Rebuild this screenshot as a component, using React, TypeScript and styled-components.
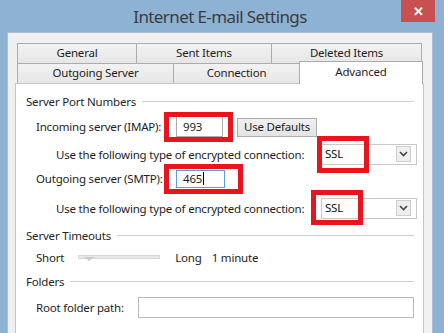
import styled, { createGlobalStyle } from 'styled-components'

const GlobalStyle = createGlobalStyle`
  html, body {
    margin: 0;
    padding: 0;
    background: #8db2d3;
  }
  * {
    box-sizing: border-box;
  }
`

const topTabs = [
  { label: 'General', width: 120 },
  { label: 'Sent Items', width: 136 },
  { label: 'Deleted Items', width: 151 },
]

const bottomTabs = [
  { label: 'Outgoing Server', width: 157, active: false },
  { label: 'Connection', width: 127, active: false },
  { label: 'Advanced', width: 124, active: true },
]

const Chevron = () => (
  <svg width="9" height="6" viewBox="0 0 9 6">
    <path d="M1 1 L4.5 4.5 L8 1" fill="none" stroke="#444" strokeWidth="1.6" />
  </svg>
)

const Select = ({ value }: { value: string }) => (
  <SelectBox>
    <SelectValue>{value}</SelectValue>
    <SelectButton>
      <Chevron />
    </SelectButton>
  </SelectBox>
)

export default function App() {
  return (
    <Window>
      <GlobalStyle />
      <TitleBar>
        <Title>Internet E-mail Settings</Title>
        <CloseButton>✕</CloseButton>
      </TitleBar>
      <DialogBody>
        <Tabs>
          <TabRow>
            {topTabs.map((tab) => (
              <Tab key={tab.label} $width={tab.width}>
                {tab.label}
              </Tab>
            ))}
          </TabRow>
          <TabRow>
            {bottomTabs.map((tab) => (
              <Tab key={tab.label} $width={tab.width} $active={tab.active}>
                {tab.label}
              </Tab>
            ))}
          </TabRow>
        </Tabs>
        <Panel>
          <GroupHeader>
            <span>Server Port Numbers</span>
            <Rule />
          </GroupHeader>
          <PortRow $gap={7}>
            <Label>Incoming server (IMAP):</Label>
            <Marked>
              <TextInput $width={47}>993</TextInput>
              <Highlight $top={-4} $left={-12} $right={-10} $bottom={-5} />
            </Marked>
            <Button>Use Defaults</Button>
          </PortRow>
          <EncryptRow $gap={6}>
            <Label>Use the following type of encrypted connection:</Label>
            <Marked>
              <Select value="SSL" />
              <Highlight $top={-8} $left={-4} $right={48} $bottom={-8} />
            </Marked>
          </EncryptRow>
          <PortRow $gap={3}>
            <Label>Outgoing server (SMTP):</Label>
            <Marked>
              <TextInput $width={49} $focused>
                465<Caret />
              </TextInput>
              <Highlight $top={-6} $left={-12} $right={-18} $bottom={-6} />
            </Marked>
          </PortRow>
          <EncryptRow $gap={8}>
            <Label>Use the following type of encrypted connection:</Label>
            <Marked>
              <Select value="SSL" />
              <Highlight $top={-8} $left={-10} $right={54} $bottom={-6} />
            </Marked>
          </EncryptRow>
          <GroupHeader $gap={8}>
            <span>Server Timeouts</span>
            <Rule />
          </GroupHeader>
          <TimeoutRow>
            <span>Short</span>
            <SliderTrack>
              <SliderThumb />
            </SliderTrack>
            <span>Long</span>
            <span>1 minute</span>
          </TimeoutRow>
          <GroupHeader $gap={8}>
            <span>Folders</span>
            <Rule />
          </GroupHeader>
          <FolderRow>
            <Label>Root folder path:</Label>
            <PathInput />
          </FolderRow>
        </Panel>
      </DialogBody>
    </Window>
  )
}

const Window = styled.div`
  width: 444px;
  height: 333px;
  overflow: hidden;
  background: #8db2d3;
  font-family: 'Noto Sans', 'Open Sans', sans-serif;
  font-size: 11.5px;
  letter-spacing: -0.2px;
  color: #1e1e1e;
  display: flex;
  flex-direction: column;
`

const TitleBar = styled.div`
  position: relative;
  flex: none;
  height: 32px;
  display: flex;
  align-items: center;
  justify-content: center;
  padding-right: 4px;
`

const Title = styled.div`
  font-size: 17px;
  letter-spacing: -0.6px;
  color: #3c3c3c;
  margin-top: 1px;
`

const CloseButton = styled.div`
  position: absolute;
  top: 0;
  left: 401px;
  width: 34px;
  height: 22px;
  background: #c75050;
  color: #fff;
  font-size: 13px;
  font-weight: 700;
  display: flex;
  align-items: center;
  justify-content: center;
`

const DialogBody = styled.div`
  flex: 1;
  min-height: 0;
  margin-left: 7px;
  width: 426px;
  background: #f0f0f0;
  border: 1px solid #a9bfd3;
  border-bottom: none;
  padding: 10px 8px 0 7px;
  display: flex;
  flex-direction: column;
`

const Tabs = styled.div`
  flex: none;
  padding-left: 2px;
  display: flex;
  flex-direction: column;
`

const TabRow = styled.div`
  display: flex;
  height: 20px;
`

const Tab = styled.div<{ $width: number; $active?: boolean }>`
  width: ${(p) => p.$width}px;
  flex: none;
  border: 1px solid #acacac;
  border-bottom: none;
  margin-right: -1px;
  background: ${(p) => (p.$active ? '#ffffff' : 'linear-gradient(#f2f2f2, #e6e6e6)')};
  display: flex;
  align-items: center;
  justify-content: center;
  padding-bottom: 1px;
  line-height: 1;
  position: relative;
  z-index: ${(p) => (p.$active ? 2 : 1)};
  ${(p) =>
    p.$active &&
    `
    margin-top: -2px;
    height: 23px;
    margin-bottom: -1px;
    align-items: flex-start;
    padding-top: 4px;
  `}
`

const Panel = styled.div`
  flex: 1;
  background: #fff;
  border: 1px solid #c5c5c5;
  border-bottom: none;
  padding: 9px 9px 0 10px;
  display: flex;
  flex-direction: column;
`

const GroupHeader = styled.div<{ $gap?: number }>`
  flex: none;
  display: flex;
  align-items: center;
  gap: 6px;
  height: 16px;
  margin-top: ${(p) => p.$gap ?? 0}px;
  color: #262626;
  white-space: nowrap;
`

const Rule = styled.div`
  flex: 1;
  height: 1px;
  background: #cfcfcf;
  margin-top: 1px;
`

const PortRow = styled.div<{ $gap: number }>`
  flex: none;
  display: grid;
  grid-template-columns: 126px auto auto;
  justify-content: start;
  align-items: center;
  column-gap: 14px;
  padding-left: 10px;
  margin-top: ${(p) => p.$gap}px;
  height: 21px;
`

const EncryptRow = styled.div<{ $gap: number }>`
  flex: none;
  display: grid;
  grid-template-columns: 265px auto;
  justify-content: start;
  align-items: center;
  padding-left: 30px;
  margin-top: ${(p) => p.$gap}px;
  height: 22px;
`

const Label = styled.span`
  white-space: nowrap;
`

const Marked = styled.div`
  position: relative;
  display: flex;
`

const Highlight = styled.div<{ $top: number; $left: number; $right: number; $bottom: number }>`
  position: absolute;
  top: ${(p) => p.$top}px;
  left: ${(p) => p.$left}px;
  right: ${(p) => p.$right}px;
  bottom: ${(p) => p.$bottom}px;
  border: 5px solid #e8141e;
  pointer-events: none;
`

const TextInput = styled.div<{ $width: number; $focused?: boolean }>`
  width: ${(p) => p.$width}px;
  height: ${(p) => (p.$focused ? 18 : 21)}px;
  border: 1px solid ${(p) => (p.$focused ? '#5a9fe0' : '#acacac')};
  background: #fff;
  padding-left: 6px;
  display: flex;
  align-items: center;
  line-height: 1;
`

const Caret = styled.span`
  display: inline-block;
  width: 1px;
  height: 13px;
  background: #000;
  margin-left: 1px;
`

const Button = styled.div`
  width: 80px;
  height: 19px;
  margin-top: 1px;
  border: 1px solid #acacac;
  background: linear-gradient(#f0f0f0, #e3e3e3);
  display: flex;
  align-items: center;
  justify-content: center;
  line-height: 1;
`

const SelectBox = styled.div`
  width: 96px;
  height: 21px;
  border: 1px solid #c8c8c8;
  background: #fff;
  display: flex;
  align-items: center;
  justify-content: space-between;
  padding: 0 5px 0 3px;
`

const SelectValue = styled.span`
  color: #111;
  line-height: 1;
`

const SelectButton = styled.div`
  width: 15px;
  height: 16px;
  border: 1px solid #cfcfcf;
  background: #eeeeee;
  display: flex;
  align-items: center;
  justify-content: center;
`

const TimeoutRow = styled.div`
  flex: none;
  display: flex;
  align-items: center;
  height: 16px;
  margin-top: 6px;
  padding-left: 10px;

  & > span:nth-of-type(2) {
    margin-left: 15px;
  }
  & > span:nth-of-type(3) {
    margin-left: 10px;
  }
`

const SliderTrack = styled.div`
  position: relative;
  width: 82px;
  height: 4px;
  margin-left: 14px;
  background: #e7e7e7;
  border: 1px solid #d6d6d6;
`

const SliderThumb = styled.div`
  position: absolute;
  left: 5px;
  top: 1px;
  width: 0;
  height: 0;
  border-left: 5px solid transparent;
  border-right: 5px solid transparent;
  border-top: 4px solid #c9c9c9;
`

const FolderRow = styled.div`
  flex: none;
  display: grid;
  grid-template-columns: 102px 1fr;
  align-items: center;
  padding-left: 10px;
  margin-top: 8px;
  height: 21px;
`

const PathInput = styled.div`
  height: 21px;
  border: 1px solid #b9b9b9;
  background: #fff;
`
